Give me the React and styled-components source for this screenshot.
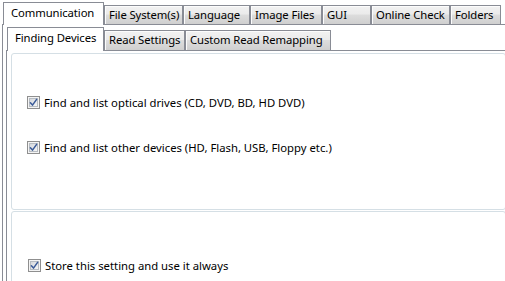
import React from "react";
import styled, { createGlobalStyle } from "styled-components";

const GlobalStyle = createGlobalStyle`
  html, body {
    margin: 0;
    padding: 0;
    background: #ffffff;
    overflow: hidden;
  }
  body {
    font-family: "Noto Sans", "Open Sans", sans-serif;
    font-size: 11.3px;
    color: #000000;
  }
`;

const Window = styled.div`
  width: 530px;
  height: 281px;
  overflow: hidden;
  padding: 2px 0 0 2px;
  box-sizing: border-box;
`;

const TabStrip = styled.div`
  display: flex;
  align-items: flex-end;
  height: ${(p) => p.$height}px;
  padding-left: 1px;
`;

const Tab = styled.div`
  box-sizing: border-box;
  width: ${(p) => p.$w}px;
  height: ${(p) => (p.$active ? p.$height + 1 : p.$height - 3)}px;
  margin-bottom: ${(p) => (p.$active ? -1 : 0)}px;
  position: relative;
  z-index: ${(p) => (p.$active ? 1 : 0)};
  border: 1px solid #898c95;
  border-bottom: none;
  padding: ${(p) => (p.$active ? "2px 0 0 7px" : "1px 0 0 4px")};
  background: ${(p) =>
    p.$active
      ? "#ffffff"
      : "linear-gradient(#f2f2f2 0%, #ebebeb 45%, #dddddd 50%, #cfcfcf 100%)"};
  box-shadow: ${(p) => (p.$active ? "none" : "inset 1px 1px 0 #fcfcfc")};
  white-space: nowrap;
  letter-spacing: -0.1px;
  line-height: 16px;
  overflow: hidden;
`;

const Panel = styled.div`
  border: 1px solid #898c95;
  background: #ffffff;
  padding: ${(p) => p.$pad};
  height: ${(p) => p.$h}px;
`;

const GroupBox = styled.div`
  box-sizing: border-box;
  width: 495px;
  height: ${(p) => p.$h}px;
  border: 1px solid #d5dfe5;
  border-radius: 3px;
  box-shadow: inset 1px 1px 0 #ffffff;
  padding: ${(p) => p.$pad};
  display: flex;
  flex-direction: column;
  gap: ${(p) => p.$gap || 0}px;
`;

const Stack = styled.div`
  display: flex;
  flex-direction: column;
  gap: 1px;
`;

const Row = styled.label`
  display: flex;
  align-items: center;
  gap: 4px;
  height: 16px;
  white-space: nowrap;
`;

const Box = styled.svg`
  flex: none;
  width: 13px;
  height: 13px;
`;

function CheckBox({ label }) {
  return (
    <Row>
      <Box viewBox="0 0 13 13">
        <defs>
          <linearGradient id="cbfill" x1="0" y1="0" x2="1" y2="1">
            <stop offset="0" stopColor="#d3d6db" />
            <stop offset="1" stopColor="#f8f8f8" />
          </linearGradient>
        </defs>
        <rect x="0.5" y="0.5" width="12" height="12" fill="#f4f4f4" stroke="#8f8f8f" />
        <rect x="2.5" y="2.5" width="8" height="8" fill="url(#cbfill)" stroke="#b7bcc2" />
        <path
          d="M3.4 6.7 L5.5 9.1 L9.6 3.4"
          fill="none"
          stroke="#3a5a98"
          strokeWidth="1.5"
          strokeLinecap="round"
          strokeLinejoin="round"
        />
      </Box>
      <span>{label}</span>
    </Row>
  );
}

const outerTabs = [
  ["Communication", 101],
  ["File System(s)", 79],
  ["Language", 67],
  ["Image Files", 72],
  ["GUI", 49],
  ["Online Check", 79],
  ["Folders", 51],
];

const innerTabs = [
  ["Finding Devices", 97],
  ["Read Settings", 81],
  ["Custom Read Remapping", 146],
];

export default function App() {
  return (
    <>
      <GlobalStyle />
      <Window>
        <TabStrip $height={22}>
          {outerTabs.map(([name, w], i) => (
            <Tab key={name} $w={w} $height={22} $active={i === 0}>
              {name}
            </Tab>
          ))}
        </TabStrip>
        <Panel $pad="2px 0 0 3px" $h={300}>
          <TabStrip $height={23}>
            {innerTabs.map(([name, w], i) => (
              <Tab key={name} $w={w} $height={23} $active={i === 0}>
                {name}
              </Tab>
            ))}
          </TabStrip>
          <Panel $pad="2px 0 0 4px" $h={260}>
            <Stack>
              <GroupBox $h={157} $pad="40px 0 0 15px" $gap={29}>
                <CheckBox label="Find and list optical drives (CD, DVD, BD, HD DVD)" />
                <CheckBox label="Find and list other devices (HD, Flash, USB, Floppy etc.)" />
              </GroupBox>
              <GroupBox $h={120} $pad="45px 0 0 16px">
                <CheckBox label="Store this setting and use it always" />
              </GroupBox>
            </Stack>
          </Panel>
        </Panel>
      </Window>
    </>
  );
}
